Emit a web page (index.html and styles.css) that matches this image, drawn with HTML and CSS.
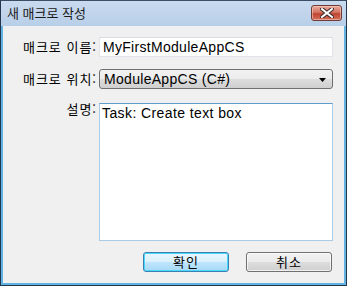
FILE: index.html
```html
<!DOCTYPE html>
<html lang="ko">
<head>
  <meta charset="UTF-8" />
  <title>새 매크로 작성</title>
  <link rel="stylesheet" href="styles.css">
</head>
<body>
  <div class="window">
    <!-- Title bar -->
    <div class="titlebar">
      <span class="title">새 매크로 작성</span>
      <button type="button" class="close-btn">
        <svg width="14" height="10" viewBox="0 0 14 10">
          <path d="M2 1 L12 9 M12 1 L2 9" stroke="#3a2a2a" stroke-width="4" stroke-linecap="square" />
          <path d="M2 1 L12 9 M12 1 L2 9" stroke="#ffffff" stroke-width="2" stroke-linecap="square" />
        </svg>
      </button>
    </div>

    <!-- Client area -->
    <div class="client">
      <div class="form-grid">
        <label class="field-label">매크로 이름:</label>
        <div class="textbox">MyFirstModuleAppCS</div>

        <label class="field-label">매크로 위치:</label>
        <div class="combo">
          <span>ModuleAppCS (C#)</span>
          <svg class="combo-arrow" width="7" height="4" viewBox="0 0 7 4">
            <path d="M0 0 H7 L3.5 4 Z" fill="#000" />
          </svg>
        </div>

        <label class="field-label top">설명:</label>
        <div class="textarea">Task: Create text box</div>
      </div>

      <div class="button-row">
        <button type="button" class="btn btn-default">확인</button>
        <button type="button" class="btn">취소</button>
      </div>
    </div>
  </div>
</body>
</html>
```

FILE: styles.css
```css
* {
  box-sizing: border-box;
}
body {
  margin: 0;
  font-family: 'Liberation Sans', 'Noto Sans CJK KR', sans-serif;
  font-size: 14px;
  letter-spacing: 0.3px;
  color: #000;
  background: #fff;
}
.window {
  width: 347px;
  height: 286px;
  display: flex;
  flex-direction: column;
  border: 1px solid #22364f;
  border-top-color: #3a4d66;
  padding: 0 2px 2px;
  background: #62b3e2;
}
/* Title bar */
.titlebar {
  height: 25px;
  margin: 0 -2px;
  padding: 0 4px 0 6px;
  display: flex;
  align-items: flex-start;
  justify-content: space-between;
  background: linear-gradient(#c9daee, #b8cfe9);
  flex-shrink: 0;
}
.title {
  margin-top: 4px;
  font-family: 'Noto Sans CJK KR', sans-serif;
  font-size: 13px;
  letter-spacing: 0;
  line-height: 16px;
  color: #1b1b1b;
}
.close-btn {
  width: 31px;
  height: 16px;
  margin-top: 4px;
  padding: 0;
  display: flex;
  align-items: center;
  justify-content: center;
  border: 1px solid #6e3a35;
  border-radius: 3px;
  background: linear-gradient(#e9a99b, #d47563 45%, #c0442f 55%, #d2705c);
  box-shadow: inset 0 0 0 1px rgba(255, 220, 210, 0.5);
}
/* Client area */
.client {
  flex: 1;
  background: #f0f0f0;
  padding: 11px 11px 0 0;
  display: flex;
  flex-direction: column;
}
.form-grid {
  display: grid;
  grid-template-columns: 94px 234px;
  grid-template-rows: 20px 20px 138px;
  column-gap: 2px;
  row-gap: 12px;
}
.form-grid .textarea {
  margin-top: 2px;
}
.field-label {
  display: flex;
  align-items: center;
  justify-content: flex-end;
  font-family: 'Noto Sans CJK KR', sans-serif;
  font-size: 13px;
  letter-spacing: 1px;
  line-height: 14px;
  white-space: nowrap;
}
.field-label.top {
  align-items: flex-start;
  margin-top: 1px;
}
.textbox {
  border: 1px solid #e2e3ea;
  border-top-color: #dadce3;
  background: #fff;
  padding: 0 3px;
  display: flex;
  align-items: center;
  line-height: 18px;
}
.combo {
  height: 20px;
  border: 1px solid #707070;
  border-radius: 3px;
  padding: 0 6px 0 4px;
  display: flex;
  align-items: center;
  justify-content: space-between;
  background: linear-gradient(#f2f2f2, #ebebeb 50%, #dddddd 51%, #cfcfcf);
}
.combo-arrow {
  margin-top: 1px;
}
.textarea {
  height: 138px;
  border: 1px solid #aacbe6;
  border-top-color: #5e9ccc;
  background: #fff;
  padding: 1px 2px;
  line-height: 16px;
  letter-spacing: 0.4px;
}
/* Buttons */
.button-row {
  display: flex;
  justify-content: flex-end;
  gap: 17px;
  margin-top: 13px;
  margin-right: 1px;
}
.btn {
  width: 86px;
  height: 20px;
  padding: 0;
  font-family: 'Noto Sans CJK KR', sans-serif;
  font-size: 13px;
  letter-spacing: 1px;
  line-height: 16px;
  color: #000;
  border: 1px solid #707070;
  border-radius: 3px;
  background: linear-gradient(#f2f2f2, #ebebeb 50%, #dddddd 51%, #cfcfcf);
  box-shadow: inset 0 0 0 1px rgba(255, 255, 255, 0.7);
}
.btn-default {
  border-color: #3c7fb1;
  background: linear-gradient(#eaf6fd, #d9f0fc 50%, #bee6fd 51%, #a7d9f5);
  box-shadow: inset 0 0 0 1px #48d8fb;
}
```
